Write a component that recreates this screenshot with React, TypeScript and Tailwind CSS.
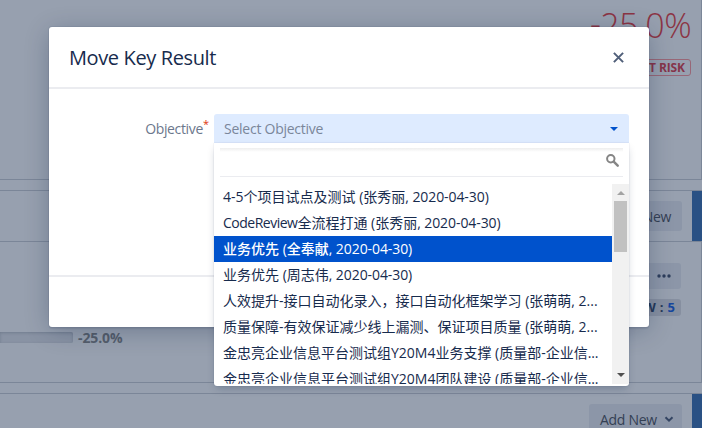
import React from "react";

type Part = [text: string, tracking?: string];

const options: { parts: Part[]; active?: boolean }[] = [
  { parts: [["4-5"], ["个项目试点及测试"], [" ("], ["张秀丽"], [", 2020-04-30)", "tracking-[-0.08px]"]] },
  { parts: [["CodeReview", "tracking-[-0.5px]"], ["全流程打通"], [" ("], ["张秀丽"], [", 2020-04-30)", "tracking-[-0.08px]"]] },
  { parts: [["业务优先"], [" ("], ["全奉献"], [", 2020-04-30)", "tracking-[-0.08px]"]], active: true },
  { parts: [["业务优先"], [" ("], ["周志伟"], [", 2020-04-30)", "tracking-[-0.08px]"]] },
  { parts: [["人效提升"], ["-"], ["接口自动化录入，接口自动化框架学习"], [" ("], ["张萌萌"], [", 2..."]] },
  { parts: [["质量保障"], ["-"], ["有效保证减少线上漏测、保证项目质量"], [" ("], ["张萌萌"], [", 2..."]] },
  { parts: [["金忠亮企业信息平台测试组"], ["Y20M4"], ["业务支撑"], [" ("], ["质量部"], ["-"], ["企业信"], ["...", "tracking-[-0.2px]"]] },
  { parts: [["金忠亮企业信息平台测试组"], ["Y20M4"], ["团队建设"], [" ("], ["质量部"], ["-"], ["企业信"], ["...", "tracking-[-0.2px]"]] },
];

function Chevron() {
  return (
    <svg width="10" height="7" viewBox="0 0 10 7" fill="none" stroke="#344563" strokeWidth="2">
      <path d="M1.5 1.2 5 4.7 8.5 1.2" />
    </svg>
  );
}

function SectionHeader({ menu = false }: { menu?: boolean }) {
  return (
    <div className="flex h-[52px] shrink-0 border-y border-[#7b8698]">
      <div className="flex flex-1 justify-end pt-[10px] pr-[10px]">
        <div className={menu ? "flex h-[30px] w-[93px] items-center justify-between rounded-[3px] bg-[#8c96a8] pr-[8px] pl-[11px] text-[14px] text-[#344054]" : "flex h-[30px] items-center rounded-[3px] bg-[#8c96a8] px-[11px] text-[14px] text-[#344054]"}>
          <span className="tracking-[-0.3px]">Add New</span>
          {menu && <Chevron />}
        </div>
      </div>
      <div className="w-[10px] bg-[#2a5184]" />
    </div>
  );
}

function Page() {
  return (
    <div className="flex h-full flex-col bg-[#97a0af]">
      <div className="flex h-[180px] shrink-0 flex-col items-end border-r border-b border-[#7b8698] pr-[10px]">
        <div className="mt-[1px] flex h-[48px] text-[34px] leading-[48px] font-light tracking-[-0.6px] text-[#8c3444]">
          <span className="-mt-[2px]">-</span><span>25.0%</span>
        </div>
        <div className="mt-[10px] flex h-[17px] items-center rounded-[3px] border border-[#986777] px-[5px] text-[12px] font-bold tracking-[-0.1px] text-[#86354a]">AT RISK</div>
      </div>
      <div className="h-[10px] shrink-0" />
      <SectionHeader />
      <div className="flex h-[141px] shrink-0 justify-between border-r border-b border-[#7b8698] pr-[20px]">
        <div className="mt-[90px] flex h-[11px] items-center gap-[5px]">
          <div className="h-[11px] w-[73px] rounded-r-[2px] bg-[#8993a4] shadow-[inset_0_1px_3px_#717c8e]" />
          <span className="pt-[1px] text-[14px] leading-none font-bold tracking-[-0.1px] text-[#555e6c]">-25.0%</span>
        </div>
        <div className="flex flex-col items-end pt-[21px]">
          <div className="flex h-[26px] w-[40px] items-center justify-end rounded-[3px] bg-[#8c96a8] pr-[10px]">
            <svg width="14" height="4" viewBox="0 0 14 4" fill="#2e3e5c"><circle cx="2" cy="2" r="1.7" /><circle cx="7" cy="2" r="1.7" /><circle cx="12" cy="2" r="1.7" /></svg>
          </div>
          <div className="mt-[10px] flex h-[17px] items-center gap-[4px] rounded-[3px] bg-[#868fa0] px-[6px] text-[13px] leading-[17px] font-bold text-[#253858]">
            <span>W</span><span>:</span><span className="text-[#17479e]">5</span>
          </div>
        </div>
      </div>
      <div className="h-[10px] shrink-0" />
      <SectionHeader menu />
    </div>
  );
}

function Dropdown() {
  return (
    <div className="absolute top-[29px] left-0 flex h-[243px] w-[415px] flex-col rounded-b-[3px] bg-white shadow-[0_4px_8px_-2px_rgba(9,30,66,0.25),0_0_1px_rgba(9,30,66,0.31)]">
      <div className="mx-[6px] mt-[5px] flex h-[29px] shrink-0 justify-end border-b border-[#ebecf0] bg-[linear-gradient(#eeeeee,#ffffff_4px)] pt-[6px] pr-[4px]">
        <svg width="13" height="13" viewBox="0 0 13 13" fill="none" stroke="#858585">
          <circle cx="4.8" cy="4.8" r="3.7" strokeWidth="2" />
          <path d="m7.7 7.7 4 4" strokeWidth="2.4" strokeLinecap="round" />
        </svg>
      </div>
      <div className="mt-[7px] flex h-[200px] overflow-hidden">
        <ul className="w-[398px]">
          {options.map((option, i) => (
            <li key={i} className={option.active ? "h-[26px] bg-[#0052cc] pl-[9px] leading-[26px] font-medium whitespace-pre text-white" : "h-[26px] pl-[9px] leading-[26px] whitespace-pre text-[#172b4d]"}>
              {option.parts.map(([text, tracking], j) => <span key={j} className={tracking}>{text}</span>)}
            </li>
          ))}
        </ul>
        <div className="flex w-[17px] flex-col items-center justify-between bg-[#f1f1f1] pt-[7px] pb-[7px]">
          <svg width="8" height="4" viewBox="0 0 8 4" className="shrink-0" fill="#a3a3a3"><path d="M0 4 4 0l4 4Z" /></svg>
          <div className="mt-[6px] mb-auto h-[51px] w-[13px] bg-[#c1c1c1]" />
          <svg width="8" height="4" viewBox="0 0 8 4" className="shrink-0" fill="#505050"><path d="m0 0 4 4 4-4Z" /></svg>
        </div>
      </div>
    </div>
  );
}

export default function App() {
  return (
    <div className="relative h-[428px] w-[702px] overflow-hidden font-['Open_Sans','Noto_Sans_CJK_SC',sans-serif] text-[14px]">
      <Page />
      <div className="absolute top-[27px] left-[49px] flex h-[300px] w-[600px] flex-col rounded-[3px] bg-white shadow-[0_0_0_1px_rgba(9,30,66,0.06),0_2px_1px_rgba(9,30,66,0.08),0_4px_26px_-2px_rgba(9,30,66,0.31)]">
        <header className="flex h-[62px] items-center justify-between border-b-2 border-[#ebecf0] pr-[25px] pl-[20px]">
          <h2 className="pt-[1px] text-[20px] font-medium tracking-[-0.38px] text-[#172b4d]">Move Key Result</h2>
          <svg width="11" height="11" viewBox="0 0 11 11" fill="none" stroke="#505f79" strokeWidth="2"><path d="m.9.9 9.2 9.2M10.1.9.9 10.1" /></svg>
        </header>
        <div className="flex h-[188px] items-start border-b-2 border-[#ebecf0] pt-[25px]">
          <label className="flex h-[29px] w-[165px] items-center justify-end pr-[5px] text-[#6b778c]">
            <span className="tracking-[-0.35px]">Objective</span><span className="-mt-[8px] text-[11px] text-[#de350b]">*</span>
          </label>
          <div className="relative flex h-[29px] w-[415px] items-center justify-between rounded-t-[3px] bg-[#deebff] pr-[11px] pl-[10px] text-[#7a869a]">
            <span className="tracking-[-0.25px]">Select Objective</span>
            <svg width="8" height="4" viewBox="0 0 8 4" fill="#0052cc"><path d="m0 0 4 4 4-4Z" /></svg>
            <Dropdown />
          </div>
        </div>
      </div>
    </div>
  );
}
